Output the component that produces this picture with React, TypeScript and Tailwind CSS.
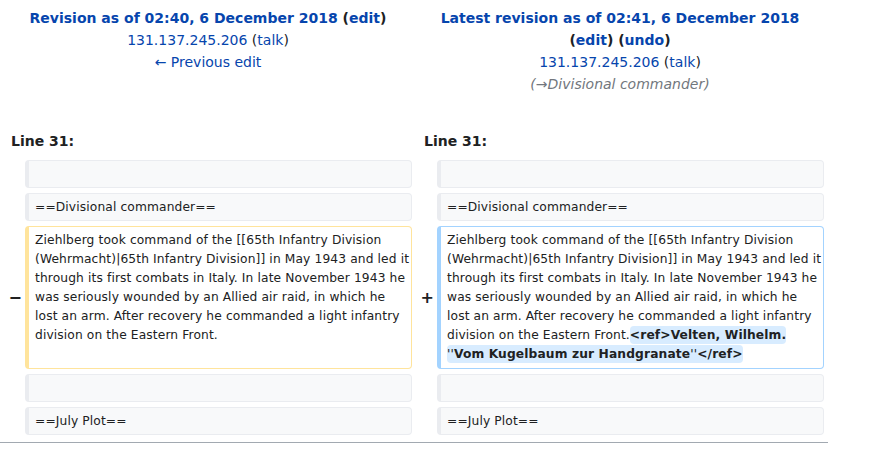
const link = "text-[#0645ad]";
const body = "text-[12.25px] leading-[19px] tracking-[0.12px] whitespace-nowrap";
const hl = "rounded-[4px] bg-[#d8ecff] py-[2px]";

const oldLines = [
  "Ziehlberg took command of the [[65th Infantry Division",
  "(Wehrmacht)|65th Infantry Division]] in May 1943 and led it",
  "through its first combats in Italy. In late November 1943 he",
  "was seriously wounded by an Allied air raid, in which he",
  "lost an arm. After recovery he commanded a light infantry",
  "division on the Eastern Front.",
];

function Context({ children }: { children?: React.ReactNode }) {
  return (
    <div className={`h-[28px] overflow-hidden rounded-[4px] border border-l-4 border-[#eaecf0] bg-[#f8f9fa] px-[6px] py-[3.5px] ${body}`}>
      {children}
    </div>
  );
}

function Marker({ sign }: { sign: string }) {
  return (
    <div className="flex items-center justify-end pr-[3px] text-[16px] font-bold leading-none">{sign}</div>
  );
}

export default function App() {
  return (
    <div className="h-[458px] w-[874px] bg-white font-['DejaVu_Sans',sans-serif] text-[#202122]">
      <div className="w-[828px]">
        {/* revision headers */}
        <div className="grid grid-cols-[412px_412px] pt-[7px] text-center text-[14px] leading-[22px]">
          <div className="pl-[4px]">
            <div className="font-bold">
              <span className={link}>Revision as of 02:40, 6 December 2018</span> (<span className={link}>edit</span>)
            </div>
            <div>
              <span className={link}>131.137.245.206</span> (<span className={link}>talk</span>)
            </div>
            <div className={link}>← Previous edit</div>
          </div>
          <div className="pl-[4px]">
            <div className={`font-bold ${link}`}>Latest revision as of 02:41, 6 December 2018</div>
            <div className="font-bold">
              (<span className={link}>edit</span>) (<span className={link}>undo</span>)
            </div>
            <div>
              <span className={link}>131.137.245.206</span> (<span className={link}>talk</span>)
            </div>
            <div className="italic text-[#72777d]">(→Divisional commander)</div>
          </div>
        </div>

        {/* line numbers */}
        <div className="mt-[37px] grid grid-cols-[412px_412px] text-[14px] font-bold leading-[19px]">
          <div className="pl-[11px]">Line 31:</div>
          <div className="pl-[12px]">Line 31:</div>
        </div>

        {/* diff rows */}
        <div className="mt-[9px] grid grid-cols-[25px_387px_25px_387px] gap-y-[5px]">
          <div />
          <Context />
          <div />
          <Context />

          <div />
          <Context>==Divisional commander==</Context>
          <div />
          <Context>==Divisional commander==</Context>

          <Marker sign="−" />
          <div className={`rounded-[4px] border border-l-4 border-[#ffe49c] px-[6px] py-[4px] ${body}`}>
            {oldLines.map((l) => (
              <div key={l}>{l}</div>
            ))}
          </div>
          <Marker sign="+" />
          <div className={`rounded-[4px] border border-l-4 border-[#a3d3ff] px-[6px] py-[4px] ${body}`}>
            {oldLines.slice(0, 5).map((l) => (
              <div key={l}>{l}</div>
            ))}
            <div>
              division on the Eastern Front.<span className={`${hl} font-bold`}>&lt;ref&gt;Velten, Wilhelm. </span>
            </div>
            <div>
              <span className={hl}>''<b>Vom Kugelbaum zur Handgranate</b>''<b>&lt;/ref&gt;</b></span>
            </div>
          </div>

          <div />
          <Context />
          <div />
          <Context />

          <div />
          <Context>==July Plot==</Context>
          <div />
          <Context>==July Plot==</Context>
        </div>

        <div className="mt-[7px] h-px bg-[#a2a9b1]" />
      </div>
    </div>
  );
}
